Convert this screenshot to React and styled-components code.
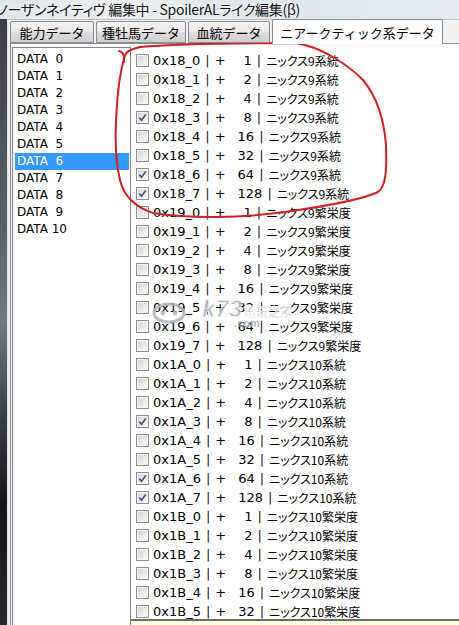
import React from 'react'
import styled, { createGlobalStyle } from 'styled-components'

const GlobalStyle = createGlobalStyle`
  html, body {
    margin: 0;
    padding: 0;
    width: 459px;
    height: 625px;
    overflow: hidden;
    background: #f0f0f0;
  }
  #root { height: 100%; }
`

const dataItems = ['DATA  0', 'DATA  1', 'DATA  2', 'DATA  3', 'DATA  4', 'DATA  5', 'DATA  6', 'DATA  7', 'DATA  8', 'DATA  9', 'DATA 10']

const groups = [
    { code: '18', label: 'ニックス9系統', checked: [3, 6, 7], count: 8 },
    { code: '19', label: 'ニックス9繁栄度', checked: [], count: 8 },
    { code: '1A', label: 'ニックス10系統', checked: [3, 6, 7], count: 8 },
    { code: '1B', label: 'ニックス10繁栄度', checked: [], count: 6 },
]

const rows = groups.flatMap(g =>
    Array.from({ length: g.count }, (_, i) => ({
        id: `0x${g.code}_${i}`,
        value: 1 << i,
        label: g.label,
        checked: g.checked.includes(i),
    }))
)

const tabs = [
    { title: '能力データ', w: 84 },
    { title: '種牡馬データ', w: 90 },
    { title: '血統データ', w: 82 },
    { title: 'ニアークティック系データ', w: 171, active: true },
]

const Check = () => (
    <svg width="9" height="9" viewBox="0 0 9 9">
        <path d="M1.3 4.6 L3.6 7.2 L7.8 1.4" fill="none" stroke="#3d4f86" strokeWidth="1.6" />
    </svg>
)

const App = () => {
    return (
        <Window>
            <GlobalStyle />
            <TitleBar>
                <TitleText>ノーザンネイティヴ 編集中 - SpoilerALライク編集(β)</TitleText>
            </TitleBar>
            <Body>
                <Frame />
                <Client>
                    <TabStrip>
                        {tabs.map(t => (
                            <Tab key={t.title} $w={t.w} $active={t.active}>{t.title}</Tab>
                        ))}
                    </TabStrip>
                    <TabPanel>
                        <ListBox>
                            {dataItems.map(d => (
                                <ListItem key={d} $selected={d === 'DATA  6'}>{d}</ListItem>
                            ))}
                        </ListBox>
                        <CheckPanel>
                            <CheckList>
                                {rows.map(r => (
                                    <CheckRow key={r.id}>
                                        <Box>{r.checked && <Check />}</Box>
                                        <Code>{r.id}</Code>
                                        <Bar>|</Bar>
                                        <Plus>+</Plus>
                                        <Num $digits={String(r.value).length}>{r.value}</Num>
                                        <Bar>|</Bar>
                                        <Label>{r.label}</Label>
                                    </CheckRow>
                                ))}
                            </CheckList>
                            <Footer />
                        </CheckPanel>
                    </TabPanel>
                </Client>
            </Body>

            <Watermark>
                <svg width="34" height="22" viewBox="0 0 34 22">
                    <ellipse cx="17" cy="11" rx="15" ry="9" fill="none" stroke="#aeb3b9" strokeWidth="3" />
                    <circle cx="11" cy="11" r="2.4" fill="#aeb3b9" />
                    <circle cx="23" cy="11" r="2.4" fill="#aeb3b9" />
                </svg>
                <MarkText>
                    <Brand>k73<small>電玩之家</small></Brand>
                    <Dot>.com</Dot>
                </MarkText>
            </Watermark>

            <Annotation width="459" height="625" viewBox="0 0 459 625">
                <path
                    d="M124,62 C123,55 126,50 140,47 C170,44 230,43 296,43 C320,47 345,62 363,80 C377,97 384,120 386,145 C387,170 386,186 378,192 C362,200 320,207 285,212 C240,218 190,219 153,213 C135,207 124,197 120,180 C115,160 115,130 117,105 C118,88 121,70 124,58 C124,55 123,52 119,51"
                    fill="none"
                    stroke="#d11f24"
                    strokeWidth="2"
                    strokeLinecap="round"
                />
            </Annotation>
        </Window>
    )
}

export default App


const Window = styled.div`
    position: relative;
    width: 459px;
    height: 625px;
    display: flex;
    flex-direction: column;
    overflow: hidden;
    font-family: "DejaVu Sans", "Noto Sans CJK JP", sans-serif;
`;
const TitleBar = styled.div`
    height: 19px;
    flex-shrink: 0;
    display: flex;
    align-items: center;
    background: linear-gradient(90deg, #dfe6ec 0%, #e9eef2 30%, #dce5ed 60%, #e6ecf1 100%);
    overflow: hidden;
`;
const TitleText = styled.div`
    margin-left: -3px;
    margin-top: -2px;
    white-space: nowrap;
    font-family: "Noto Sans CJK JP", sans-serif;
    font-size: 14px;
    font-feature-settings: "palt";
    letter-spacing: -0.3px;
    color: #111;
    text-shadow: 0 0 6px #fff, 0 0 3px #fff;
`;
const Body = styled.div`
    flex: 1;
    display: flex;
    min-height: 0;
`;
const Frame = styled.div`
    width: 7px;
    flex-shrink: 0;
    background: linear-gradient(180deg, #3b3f45 0%, #5b626b 35%, #6f7985 50%, #3a4048 65%, #141619 80%, #24282d 100%);
`;
const Client = styled.div`
    flex: 1;
    display: flex;
    flex-direction: column;
    min-width: 0;
    background: #f0f0f0;
    border-left: 1px solid #dfe3e8;
    border-top: 1px solid #b9c0c8;
    padding-left: 2px;
`;
const TabStrip = styled.div`
    height: 23px;
    display: flex;
    align-items: flex-end;
    flex-shrink: 0;
    position: relative;
    z-index: 1;
`;
const Tab = styled.div`
    box-sizing: border-box;
    width: ${p => p.$w}px;
    height: ${p => (p.$active ? 25 : 22)}px;
    margin-bottom: ${p => (p.$active ? -1 : 0)}px;
    margin-right: ${p => (p.$active ? 0 : 2)}px;
    display: flex;
    align-items: center;
    justify-content: center;
    border: 1px solid #898c95;
    border-bottom: ${p => (p.$active ? 'none' : '1px solid #898c95')};
    border-radius: 2px 2px 0 0;
    background: ${p => (p.$active ? '#ffffff' : 'linear-gradient(180deg, #f4f4f4 0%, #ebebeb 50%, #dddddd 51%, #cfcfcf 100%)')};
    font-family: "Noto Sans CJK JP", sans-serif;
    font-size: 13px;
    color: #000;
    white-space: nowrap;
    padding-top: ${p => (p.$active ? 0 : 1)}px;
`;
const TabPanel = styled.div`
    flex: 1;
    display: flex;
    min-height: 0;
    background: #fcfcfc;
    border-top: 1px solid #898c95;
    border-left: 1px solid #898c95;
    padding: 3px 0 0 1px;
`;
const ListBox = styled.div`
    width: 119px;
    box-sizing: border-box;
    flex-shrink: 0;
    display: flex;
    flex-direction: column;
    background: #fff;
    border: 1px solid #828790;
    border-bottom: none;
    padding: 3px 1px 0 2px;
`;
const ListItem = styled.div`
    height: 17px;
    line-height: 17px;
    padding-left: 2px;
    font-size: 12px;
    white-space: pre;
    color: ${p => (p.$selected ? '#fff' : '#000')};
    background: ${p => (p.$selected ? '#3399ff' : 'transparent')};
`;
const CheckPanel = styled.div`
    flex: 1;
    display: flex;
    flex-direction: column;
    min-width: 0;
    background: #fff;
`;
const CheckList = styled.div`
    flex: 1;
    min-height: 0;
    overflow: hidden;
    display: flex;
    flex-direction: column;
    padding: 4px 0 0 5px;
`;
const CheckRow = styled.div`
    height: 19px;
    flex-shrink: 0;
    display: flex;
    align-items: center;
    font-size: 13px;
    color: #000;
    white-space: nowrap;
`;
const Box = styled.span`
    box-sizing: border-box;
    width: 13px;
    height: 13px;
    margin-right: 4px;
    flex-shrink: 0;
    display: flex;
    align-items: center;
    justify-content: center;
    border: 1px solid #8e8f8f;
    box-shadow: inset 0 0 0 1px #f5f5f5;
    background: linear-gradient(135deg, #cfd2d6 0%, #e6e7e9 50%, #fbfbfb 100%);
`;
const Code = styled.span``;
const Bar = styled.span`
    margin: 0 5px;
    color: #222;
`;
const Plus = styled.span``;
const Num = styled.span`
    margin-left: ${p => (p.$digits === 1 ? 18 : 12)}px;
`;
const Label = styled.span`
    font-family: "Noto Sans CJK JP", sans-serif;
    font-size: 12px;
    font-feature-settings: "palt";
`;
const Footer = styled.div`
    height: 4px;
    flex-shrink: 0;
    border-top: 2px solid #6a6a6a;
    background: #ffffe1;
`;
const Watermark = styled.div`
    position: absolute;
    left: 152px;
    top: 297px;
    display: flex;
    align-items: center;
    gap: 16px;
    opacity: 0.85;
    pointer-events: none;
`;
const MarkText = styled.div`
    display: flex;
    flex-direction: column;
    align-items: center;
    line-height: 1;
`;
const Brand = styled.div`
    font-family: "Liberation Sans", sans-serif;
    font-weight: bold;
    font-style: italic;
    font-size: 24px;
    color: #a9aeb4;
    -webkit-text-stroke: 0.8px #fff;
    small {
        font-family: "Noto Sans CJK JP", sans-serif;
        font-style: normal;
        font-size: 12px;
        margin-left: 2px;
    }
`;
const Dot = styled.div`
    font-family: "Liberation Sans", sans-serif;
    font-weight: bold;
    font-size: 11px;
    color: #a9aeb4;
    margin-top: -3px;
`;
const Annotation = styled.svg`
    position: absolute;
    left: 0;
    top: 0;
    pointer-events: none;
`;
